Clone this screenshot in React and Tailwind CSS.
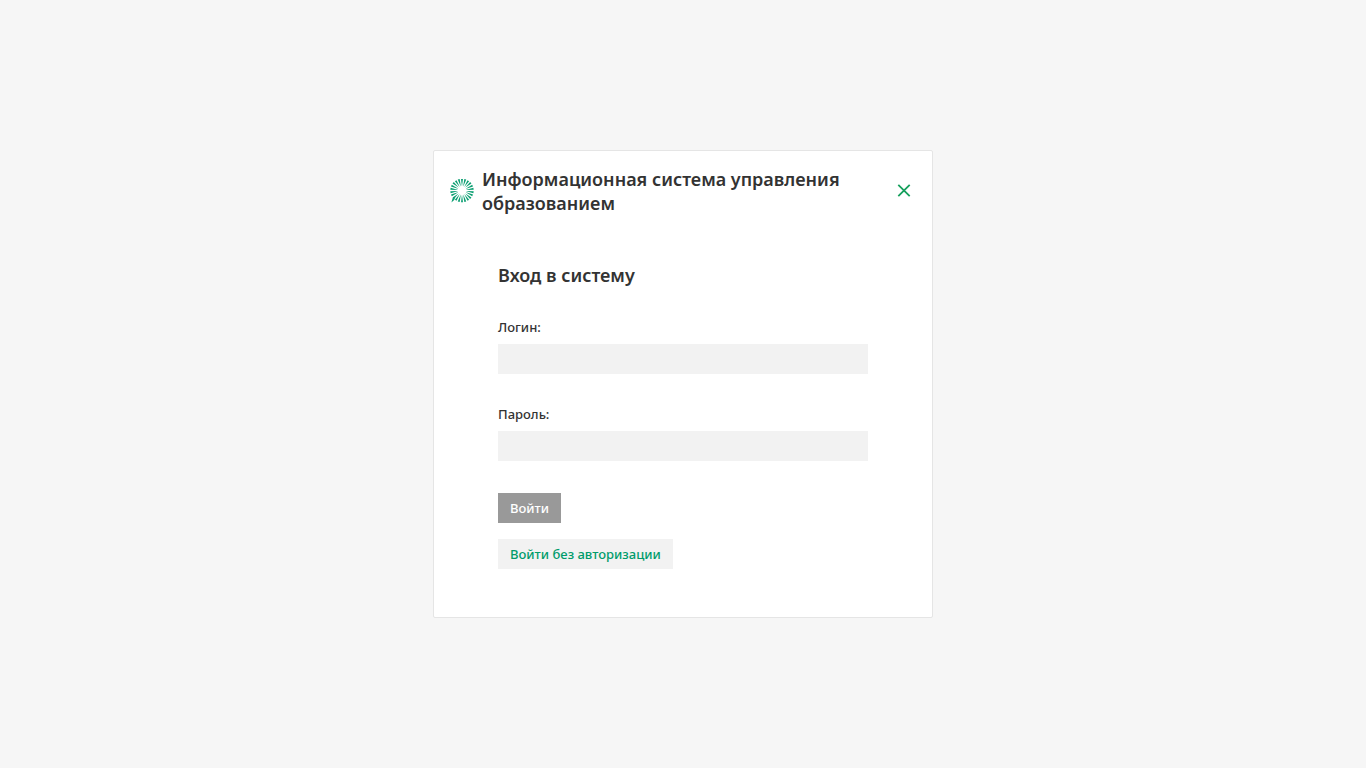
import { useState } from 'react';

const RAYS = 22;

// wedge from the inner ring to the outer one, wider at the outside
const rayPath = (index) => {
    const angle = (index / RAYS) * Math.PI * 2;
    const point = (radius, offset) =>
        `${(12 + radius * Math.sin(angle + offset)).toFixed(2)} ${(11.5 - radius * Math.cos(angle + offset)).toFixed(2)}`;
    return `M${point(4.5, -0.02)}L${point(11.7, -0.085)}L${point(11.7, 0.085)}L${point(4.5, 0.02)}Z`;
};

const Logo = () => (
    <svg className="size-6 shrink-0" viewBox="0 0 24 24" fill="#0c9f72" aria-hidden="true">
        {Array.from({ length: RAYS }, (_, i) => (
            <path key={i} d={rayPath(i)} />
        ))}
        <path d="M1.4 23.6L2.6 19.2L5.4 17.6L4.2 21Z" />
    </svg>
);

const CloseIcon = () => (
    <svg className="size-6" viewBox="0 0 24 24" fill="none" stroke="#16a05d" strokeWidth="1.8" aria-hidden="true">
        <path d="M6.3 5.8L17.7 17.2M17.7 5.8L6.3 17.2" />
    </svg>
);

const Field = ({ id, label, type, value, onChange }) => (
    <div className="mb-8">
        <label htmlFor={id} className="mb-2 block text-[13px] leading-[17px] font-medium">{label}</label>
        <input
            id={id}
            type={type}
            value={value}
            onChange={(e) => onChange(e.target.value)}
            className="block h-[30px] w-full bg-[#f2f2f2] px-2 text-[13px] outline-none"
        />
    </div>
);

const App = () => {
    const [login, setLogin] = useState('');
    const [password, setPassword] = useState('');

    return (
        <div className="flex min-h-screen items-center justify-center bg-[#f6f6f6] font-['Noto_Sans','Open_Sans',sans-serif] text-[#333]">
            <main className="w-full max-w-[500px] rounded-xs border border-[#e5e5e5] bg-white">
                <header className="flex items-center gap-2 p-4">
                    <Logo />
                    <h1 className="flex-1 text-lg leading-6 font-semibold">
                        Информационная система управления образованием
                    </h1>
                    <button type="button" aria-label="Закрыть" className="shrink-0">
                        <CloseIcon />
                    </button>
                </header>

                <form className="px-16 pt-8 pb-12" onSubmit={(e) => e.preventDefault()}>
                    <h2 className="mb-8 text-lg leading-6 font-semibold">Вход в систему</h2>
                    <Field id="login" label="Логин:" type="text" value={login} onChange={setLogin} />
                    <Field id="password" label="Пароль:" type="password" value={password} onChange={setPassword} />
                    <div className="flex flex-col items-start gap-4">
                        <button type="submit" className="h-[30px] bg-[#999] px-3 pt-0.5 text-[13px] font-medium text-white">
                            Войти
                        </button>
                        <button type="button" className="h-[30px] bg-[#f2f2f2] px-3 pt-0.5 text-[13px] font-medium text-[#009c6b]">
                            Войти без авторизации
                        </button>
                    </div>
                </form>
            </main>
        </div>
    );
};

export default App;
